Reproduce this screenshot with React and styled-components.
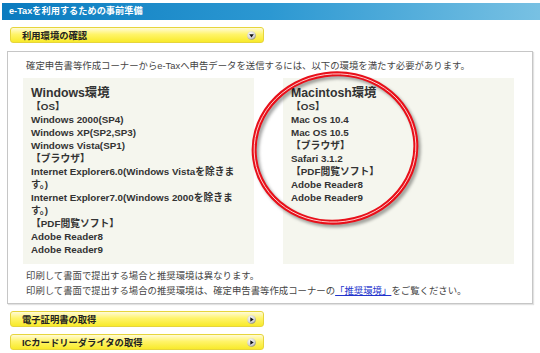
import styled, { createGlobalStyle } from "styled-components";

const GlobalStyle = createGlobalStyle`
  body {
    margin: 0;
    background: #fff;
    font-family: "Liberation Sans", "Noto Sans CJK JP", sans-serif;
    color: #333;
  }
`;

const windowsLines = [
    "【OS】",
    "Windows 2000(SP4)",
    "Windows XP(SP2,SP3)",
    "Windows Vista(SP1)",
    "【ブラウザ】",
    "Internet Explorer6.0(Windows Vistaを除きます。)",
    "Internet Explorer7.0(Windows 2000を除きます。)",
    "【PDF閲覧ソフト】",
    "Adobe Reader8",
    "Adobe Reader9",
];

const macLines = [
    "【OS】",
    "Mac OS 10.4",
    "Mac OS 10.5",
    "【ブラウザ】",
    "Safari 3.1.2",
    "【PDF閲覧ソフト】",
    "Adobe Reader8",
    "Adobe Reader9",
];

export default function App() {
    return (
        <>
            <GlobalStyle />
            <Page>
                <Header>e-Taxを利用するための事前準備</Header>
                <Bar label="利用環境の確認" open />
                <Box>
                    <Intro>確定申告書等作成コーナーからe-Taxへ申告データを送信するには、以下の環境を満たす必要があります。</Intro>
                    <Panels>
                        <EnvPanel title="Windows環境" lines={windowsLines} />
                        <EnvPanel title="Macintosh環境" lines={macLines} />
                    </Panels>
                    <Note>
                        印刷して書面で提出する場合と推奨環境は異なります。
                        <br />
                        印刷して書面で提出する場合の推奨環境は、確定申告書等作成コーナーの<Link href="#">「推奨環境」</Link>をご覧ください。
                    </Note>
                </Box>
                <Bar label="電子証明書の取得" spaced />
                <Bar label="ICカードリーダライタの取得" />
                <Circle />
            </Page>
        </>
    );
}

// 黄色い見出しバー (右端に丸ボタン)
const Bar = ({ label, open, spaced }) => (
    <BarWrap $spaced={spaced}>
        <BarLabel>{label}</BarLabel>
        <svg width="9" height="9" viewBox="0 0 9 9">
            <defs>
                <radialGradient id="btn" cx="40%" cy="35%" r="70%">
                    <stop offset="0%" stopColor="#ffffff" />
                    <stop offset="70%" stopColor="#cfcfcf" />
                    <stop offset="100%" stopColor="#777" />
                </radialGradient>
            </defs>
            <circle cx="4.5" cy="4.5" r="4.3" fill="url(#btn)" />
            {open ? (
                <path d="M2.2 3.2 L6.8 3.2 L4.5 6.6 Z" fill="#111" />
            ) : (
                <path d="M3.3 2.2 L6.7 4.5 L3.3 6.8 Z" fill="#111" />
            )}
        </svg>
    </BarWrap>
);

const EnvPanel = ({ title, lines }) => (
    <Panel>
        <PanelTitle>{title}</PanelTitle>
        {lines.map((line, i) => (
            <PanelLine key={i}>{line}</PanelLine>
        ))}
    </Panel>
);

const Circle = () => (
    <CircleSvg width="190" height="175" viewBox="0 0 190 175">
        <defs>
            <filter id="blur" x="-20%" y="-20%" width="140%" height="140%">
                <feGaussianBlur stdDeviation="1.6" />
            </filter>
        </defs>
        <g transform="rotate(-8 90 85)">
            <ellipse cx="92" cy="88" rx="81" ry="74" fill="none" stroke="rgba(0,0,0,0.35)" strokeWidth="5" filter="url(#blur)" />
            <ellipse cx="90" cy="85" rx="81" ry="74" fill="none" stroke="#e8101a" strokeWidth="5" />
            <ellipse cx="90" cy="85" rx="81" ry="74" fill="none" stroke="#ffd6d6" strokeWidth="0.9" />
        </g>
    </CircleSvg>
);

const Page = styled.div`
    position: relative;
    width: 538px;
    padding: 3px 0 0 2px;
`;

const Header = styled.div`
    height: 17px;
    line-height: 17px;
    padding-left: 7px;
    color: #fff;
    font-weight: bold;
    font-size: 9.2px;
    background: linear-gradient(to right, #0a7bbf 0%, #2c98d2 50%, #78c1e3 100%);
`;

const BarWrap = styled.div`
    display: flex;
    align-items: center;
    justify-content: space-between;
    box-sizing: border-box;
    width: 254px;
    height: 16px;
    margin: 7px 0 0 8px;
    padding: 0 7px 0 11px;
    border: 1px solid #e6d53c;
    border-radius: 3px;
    background: linear-gradient(#fffbd8 0%, #fff46a 45%, #f8ea2a 100%);
`;

const BarLabel = styled.span`
    font-size: 9.3px;
    font-weight: bold;
    color: #222;
`;

const Box = styled.div`
    box-sizing: border-box;
    width: 526px;
    margin: 8px 0 0 5px;
    padding: 6px 0 5px 0;
    border: 1px solid #c6c6c6;
    box-shadow: 1px 1px 1px #e2e2e2;
    font-size: 9.4px;
    color: #444;
`;

const Intro = styled.p`
    margin: 0 0 5px 18px;
    line-height: 15px;
`;

const Panels = styled.div`
    display: grid;
    grid-template-columns: 231px 231px;
    column-gap: 29px;
    margin-left: 15px;
`;

const Panel = styled.div`
    background: #f5f6ee;
    padding: 8px 12px 8px 8px;
    color: #333;
`;

const PanelTitle = styled.div`
    font-size: 12.3px;
    font-weight: bold;
    line-height: 14px;
`;

const PanelLine = styled.div`
    font-size: 9.8px;
    font-weight: bold;
    line-height: 13px;
`;

const Note = styled.p`
    margin: 5px 0 0 18px;
    line-height: 14.5px;
`;

const Link = styled.a`
    color: #2233cc;
    text-decoration: underline;
`;

const CircleSvg = styled.svg`
    position: absolute;
    left: 245px;
    top: 63px;
    pointer-events: none;
`;
